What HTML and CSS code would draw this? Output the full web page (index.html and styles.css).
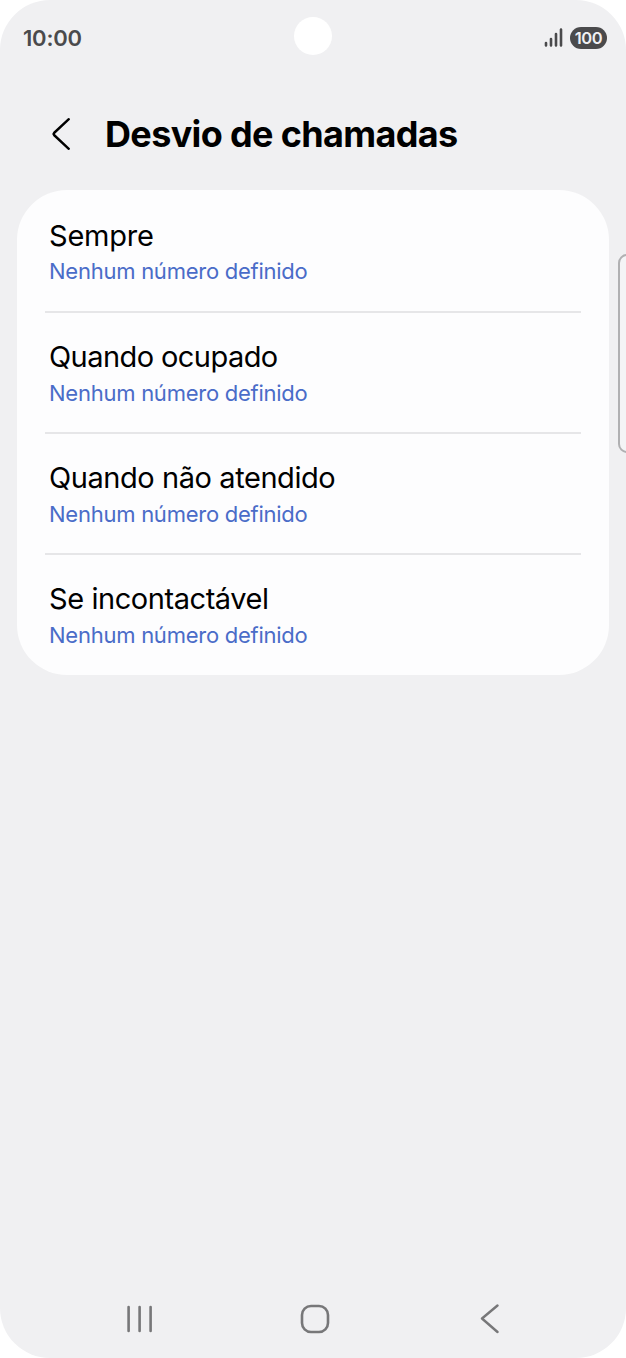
FILE: index.html
```html
<!DOCTYPE html>
<html lang="pt">
<head>
    <meta charset="UTF-8">
    <meta name="viewport" content="width=device-width, initial-scale=1.0">
    <title>Desvio de chamadas</title>
    <link rel="stylesheet" href="styles.css">
</head>
<body>
    <div class="phone">
        <div class="status-bar">
            <span class="time">10:00</span>
            <div class="status-icons">
                <svg width="19" height="20" viewBox="0 0 19 20" fill="none" stroke="#4a4a4c" stroke-width="2.6" stroke-linecap="round">
                    <path d="M2 15v2.4M7 11v6.4M12 6v11.4M17 1.6v15.8"/>
                </svg>
                <span class="battery">100</span>
            </div>
        </div>
        <div class="camera"></div>

        <header class="header">
            <svg width="20" height="34" viewBox="0 0 20 34" fill="none" stroke="#000" stroke-width="2.4" stroke-linecap="round" stroke-linejoin="round">
                <path d="M17.8 2.2L3 16q-1 1 0 2L17.8 31.8"/>
            </svg>
            <h1>Desvio de chamadas</h1>
        </header>

        <main class="card">
            <div class="row">
                <h2 class="always">Sempre</h2>
                <p>Nenhum número definido</p>
            </div>
            <div class="row">
                <h2 class="busy">Quando ocupado</h2>
                <p>Nenhum número definido</p>
            </div>
            <div class="row">
                <h2>Quando não atendido</h2>
                <p>Nenhum número definido</p>
            </div>
            <div class="row">
                <h2>Se incontactável</h2>
                <p>Nenhum número definido</p>
            </div>
        </main>

        <div class="edge-handle"></div>

        <nav class="nav-bar">
            <svg width="28" height="30" viewBox="0 0 28 30" fill="none" stroke="#777779" stroke-width="2.6" stroke-linecap="round">
                <path d="M2.6 3v24M13.6 3v24M24.6 3v24"/>
            </svg>
            <svg width="30" height="30" viewBox="0 0 30 30" fill="none" stroke="#777779" stroke-width="2.6">
                <rect x="2" y="2" width="26" height="26" rx="9"/>
            </svg>
            <svg width="24" height="30" viewBox="0 0 24 30" fill="none" stroke="#777779" stroke-width="2.4" stroke-linecap="round" stroke-linejoin="round">
                <path d="M21.5 1.5L6 14.5l15.5 13.5"/>
            </svg>
        </nav>
    </div>
</body>
</html>
```
FILE: styles.css
```css
:root {
    --bg-color: #f0f0f2;
    --card-color: #fdfdfe;
    --link-color: #4a6cc8;
    --status-color: #4a4a4c;
}

* {
    margin: 0;
    padding: 0;
    box-sizing: border-box;
    font-family: Inter, 'Liberation Sans', sans-serif;
}

body {
    background: white;
}

.phone {
    position: relative;
    width: 626px;
    height: 1358px;
    background: var(--bg-color);
    border-radius: 50px;
    overflow: hidden;
    display: flex;
    flex-direction: column;
}

.status-bar {
    height: 76px;
    padding: 0 19px 0 23px;
    display: flex;
    align-items: center;
    justify-content: space-between;
    color: var(--status-color);
}

.time {
    font-size: 22px;
    font-weight: 600;
    letter-spacing: -0.2px;
}

.status-icons {
    display: flex;
    align-items: center;
    gap: 7px;
}

.battery {
    width: 37px;
    height: 22px;
    border-radius: 11px;
    background: var(--status-color);
    color: #f0f0f2;
    font-size: 16.5px;
    font-weight: 600;
    letter-spacing: -0.4px;
    line-height: 22px;
    text-align: center;
}

/* front camera cut-out, sits over the status bar */
.camera {
    position: absolute;
    top: 17px;
    left: 294px;
    width: 38px;
    height: 38px;
    border-radius: 50%;
    background: white;
}

.header {
    height: 114px;
    padding: 2px 50px 0 51px;
    display: flex;
    align-items: center;
    gap: 34px;
}

.header h1 {
    font-size: 36px;
    font-weight: 700;
    letter-spacing: -0.65px;
    white-space: nowrap;
}

.card {
    height: 485px;
    margin: 0 17px;
    padding: 0 28px;
    background: var(--card-color);
    border-radius: 50px;
    display: grid;
    grid-template-rows: 121px 121px 121px 122px;
}

.row {
    padding: 28px 0 0 4px;
    white-space: nowrap;
}

.row + .row {
    border-top: 2px solid #e6e6e8;
    padding-top: 26px;
}

.row h2 {
    font-size: 29px;
    font-weight: 400;
    letter-spacing: -0.43px;
    line-height: 36px;
}

.row .always {
    letter-spacing: -0.2px;
    line-height: 35px;
}

.row .busy {
    letter-spacing: -0.57px;
}

.row p {
    font-size: 22px;
    letter-spacing: -0.25px;
    line-height: 36px;
    color: var(--link-color);
}

/* edge panel handle, partly off screen */
.edge-handle {
    position: absolute;
    top: 254px;
    right: -12px;
    width: 20px;
    height: 199px;
    border: 2px solid #b0b0b2;
    border-radius: 9px;
    background: #f4f4f6;
}

.nav-bar {
    margin-top: auto;
    height: 80px;
    padding: 1px 126px 0;
    display: flex;
    align-items: center;
    justify-content: space-between;
}
```
